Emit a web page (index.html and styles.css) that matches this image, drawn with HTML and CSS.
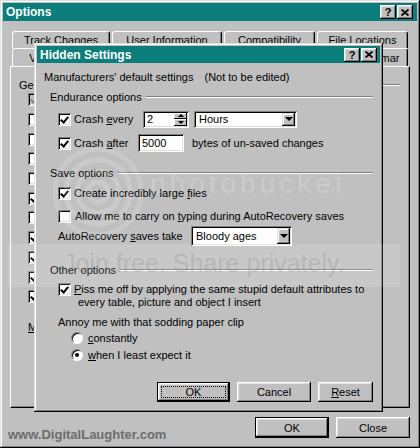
FILE: index.html
```html
<!DOCTYPE html>
<html lang="en">
<head>
    <meta charset="UTF-8">
    <meta name="viewport" content="width=device-width, initial-scale=1.0">
    <title>Options - Hidden Settings</title>
    <link rel="stylesheet" href="styles.css">
</head>
<body>
    <div class="window">
        <div class="titlebar">
            <span>Options</span>
            <div class="caption-btns">
                <span class="cbtn">?</span>
                <span class="cbtn"><svg width="8" height="7" viewBox="0 0 8 7"><path d="M0.5 0.5 L7.5 6.5 M7.5 0.5 L0.5 6.5" stroke="#000" stroke-width="1.8"/></svg></span>
            </div>
        </div>

        <div class="tabs">
            <div class="tab-row back">
                <div class="tab t-track">Track Changes</div>
                <div class="tab t-user">User Information</div>
                <div class="tab t-compat">Compatibility</div>
                <div class="tab t-files">File Locations</div>
            </div>
            <!-- middle tabs sit under the dialog, so only their frames are drawn -->
            <div class="tab-row front">
                <div class="tab t-view">View</div>
                <div class="tab t-general active"></div>
                <div class="tab t-small"></div>
                <div class="tab t-small"></div>
                <div class="tab t-small"></div>
                <div class="tab t-spelling">Spelling &amp; Grammar</div>
            </div>
        </div>

        <div class="panel">
            <div class="group-head">
                <span>General options</span>
                <span class="etch"></span>
            </div>
            <ul class="opt-list">
                <li><span class="check on disabled"></span></li>
                <li><span class="check"></span></li>
                <li><span class="check"></span></li>
                <li><span class="check"></span></li>
                <li><span class="check"></span></li>
                <li><span class="check on"></span></li>
                <li><span class="check"></span></li>
                <li><span class="check on"></span></li>
                <li><span class="check on"></span></li>
                <li><span class="check on"></span></li>
                <li><span class="check on"></span></li>
            </ul>
            <div class="units"><u>M</u></div>
        </div>

        <div class="footer">
            <span class="credit">www.DigitalLaughter.com</span>
            <button class="btn default wide">OK</button>
            <button class="btn wide">Close</button>
        </div>

        <div class="dialog">
            <div class="titlebar">
                <span>Hidden Settings</span>
                <div class="caption-btns">
                    <span class="cbtn">?</span>
                    <span class="cbtn"><svg width="8" height="7" viewBox="0 0 8 7"><path d="M0.5 0.5 L7.5 6.5 M7.5 0.5 L0.5 6.5" stroke="#000" stroke-width="1.8"/></svg></span>
                </div>
            </div>

            <div class="dialog-body">
                <div class="intro">Manufacturers' default settings <span class="note">(Not to be edited)</span></div>

                <section class="group endurance">
                    <div class="group-head"><span>Endurance options</span><span class="etch"></span></div>
                    <div class="opt every">
                        <span class="check on"></span>
                        <span class="lbl">Crash <u>e</u>very</span>
                        <div class="spin">
                            <span class="spin-val">2</span>
                            <span class="spin-btns">
                                <span><i class="tri-up"></i></span>
                                <span><i class="tri-down small"></i></span>
                            </span>
                        </div>
                        <div class="select hours">
                            <span class="select-val">Hours</span>
                            <span class="drop"><i class="tri-down"></i></span>
                        </div>
                    </div>
                    <div class="opt after">
                        <span class="check on"></span>
                        <span class="lbl">Crash <u>a</u>fter</span>
                        <div class="field bytes">5000</div>
                        <span class="suffix">bytes of un-saved changes</span>
                    </div>
                </section>

                <section class="group save">
                    <div class="group-head"><span>Save options</span><span class="etch"></span></div>
                    <div class="opt create">
                        <span class="check on"></span>
                        <span class="lbl">Create incredibly large <u>f</u>iles</span>
                    </div>
                    <div class="opt allow">
                        <span class="check"></span>
                        <span class="lbl">Allow me to carry on <u>t</u>yping during AutoRecovery saves</span>
                    </div>
                    <div class="opt autorec">
                        <span class="lbl">AutoRecovery <u>s</u>aves take</span>
                        <div class="select ages">
                            <span class="select-val">Bloody ages</span>
                            <span class="drop"><i class="tri-down"></i></span>
                        </div>
                    </div>
                </section>

                <section class="group other">
                    <div class="group-head"><span>Other options</span><span class="etch"></span></div>
                    <div class="opt multi">
                        <span class="check on"></span>
                        <span class="lbl"><u>P</u>iss me off by applying the same stupid default attributes to<br>every table, picture and object I insert</span>
                    </div>
                    <div class="opt annoy">Annoy me with that sodding paper clip</div>
                    <div class="opt radio-row">
                        <span class="radio"></span>
                        <span class="lbl"><u>c</u>onstantly</span>
                    </div>
                    <div class="opt radio-row">
                        <span class="radio on"></span>
                        <span class="lbl"><u>w</u>hen I least expect it</span>
                    </div>
                </section>

                <div class="dlg-buttons">
                    <button class="btn default ok"><span class="focus">OK</span></button>
                    <button class="btn cancel">Cancel</button>
                    <button class="btn reset"><u>R</u>eset</button>
                </div>
            </div>
        </div>

        <div class="watermark">
            <svg class="pb-logo" width="100" height="100" viewBox="0 0 100 100">
                <circle cx="50" cy="50" r="10" fill="none" stroke="#fff" stroke-opacity="0.16" stroke-width="5"/>
                <circle cx="50" cy="50" r="21" fill="none" stroke="#fff" stroke-opacity="0.16" stroke-width="5"/>
                <circle cx="50" cy="50" r="32" fill="none" stroke="#fff" stroke-opacity="0.16" stroke-width="5"/>
                <circle cx="50" cy="50" r="43" fill="none" stroke="#fff" stroke-opacity="0.14" stroke-width="5"/>
            </svg>
            <span class="pb-name">photobucket</span>
            <div class="pb-band">Join free. Share privately.</div>
        </div>
    </div>
</body>
</html>
```

FILE: styles.css
```css
* {
    box-sizing: border-box;
}
body {
    margin: 0;
    background: #c0c0c0;
    font-family: "Liberation Sans", Arial, sans-serif;
    font-size: 11px;
    color: #000;
}
button {
    font: inherit;
    color: #000;
    border: none;
    padding: 0;
}

/* window frame */
.window {
    position: relative;
    width: 420px;
    height: 448px;
    padding: 3px;
    background: #c0c0c0;
    display: flex;
    flex-direction: column;
    overflow: hidden;
    box-shadow: inset -1px -1px #000, inset 1px 1px #dfdfdf, inset -2px -2px #808080, inset 2px 2px #fff;
}
.titlebar {
    flex: none;
    height: 18px;
    padding: 0 4px 0 3px;
    display: flex;
    align-items: center;
    justify-content: space-between;
    background: #0b7d7b;
    color: #fff;
    font-size: 12px;
    font-weight: bold;
}
.caption-btns {
    display: flex;
    gap: 1px;
}
.cbtn {
    width: 16px;
    height: 14px;
    display: flex;
    align-items: center;
    justify-content: center;
    background: #c0c0c0;
    color: #000;
    font-size: 11px;
    font-weight: bold;
    box-shadow: inset -1px -1px #000, inset 1px 1px #fff, inset -2px -2px #808080, inset 2px 2px #dfdfdf;
}

/* tabs */
.tabs {
    flex: none;
    margin: 10px 9px 0;
}
.tab-row {
    display: flex;
}
.tab-row.back {
    height: 17px;
    gap: 2px;
}
.tab-row.front {
    height: 18px;
}
.tab {
    display: flex;
    align-items: center;
    justify-content: center;
    background: #c0c0c0;
    border-top: 1px solid #fff;
    border-left: 1px solid #fff;
    border-right: 1px solid #000;
    border-radius: 3px 3px 0 0;
    box-shadow: inset -1px 0 #808080;
    white-space: nowrap;
    overflow: hidden;
}
.t-track { width: 98px; }
.t-user { width: 110px; }
.t-compat { width: 91px; }
.t-files { flex: 1; }
.t-view { width: 58px; }
.t-general { width: 66px; }
.t-small { width: 52px; }
.t-spelling { flex: 1; }

/* tab sheet */
.panel {
    flex: none;
    height: 342px;
    margin: 0 7px;
    padding: 11px 9px 0 8px;
    border-top: 1px solid #fff;
    border-left: 1px solid #fff;
    border-right: 1px solid #000;
    border-bottom: 1px solid #000;
    box-shadow: inset -1px -1px #808080;
}
.group-head {
    display: flex;
    align-items: center;
    height: 14px;
    white-space: nowrap;
}
.etch {
    flex: 1;
    height: 2px;
    margin-left: 4px;
    border-top: 1px solid #808080;
    border-bottom: 1px solid #fff;
}
.opt-list {
    list-style: none;
    margin: -2px 0 0 9px;
    padding: 0;
}
.opt-list li {
    height: 19.7px;
    display: flex;
    align-items: center;
}
.units {
    margin-top: 14px;
    padding-left: 9px;
    height: 14px;
}

/* checkboxes and radios */
.check {
    position: relative;
    flex: none;
    width: 13px;
    height: 13px;
    background: #fff;
    box-shadow: inset 1px 1px #808080, inset -1px -1px #fff, inset 2px 2px #000, inset -2px -2px #dfdfdf;
}
.check.on::after {
    content: "";
    position: absolute;
    left: 4px;
    top: 2px;
    width: 3px;
    height: 6px;
    border: solid #000;
    border-width: 0 2px 2px 0;
    transform: rotate(40deg);
}
.check.disabled {
    background: #c0c0c0;
}
.check.disabled::after {
    border-color: #808080;
}
.radio {
    flex: none;
    width: 12px;
    height: 12px;
    display: flex;
    align-items: center;
    justify-content: center;
    border-radius: 50%;
    background: #fff;
    border: 1px solid;
    border-color: #808080 #fff #fff #808080;
    box-shadow: inset 1px 1px #000;
}
.radio.on::after {
    content: "";
    width: 4px;
    height: 4px;
    border-radius: 50%;
    background: #000;
}

/* buttons */
.btn {
    height: 20px;
    display: flex;
    align-items: center;
    justify-content: center;
    background: #c0c0c0;
    box-shadow: inset -1px -1px #000, inset 1px 1px #fff, inset -2px -2px #808080, inset 2px 2px #dfdfdf;
}
.btn.default {
    box-shadow: inset 0 0 0 1px #000, inset -2px -2px #000, inset 2px 2px #fff, inset -3px -3px #808080, inset 3px 3px #dfdfdf;
}
.btn.wide {
    width: 74px;
    height: 21px;
}
.focus {
    display: flex;
    align-items: center;
    justify-content: center;
    width: 100%;
    height: 100%;
    border: 1px dotted #000;
}

/* footer */
.footer {
    flex: 1;
    display: flex;
    align-items: flex-start;
    gap: 7px;
    padding: 9px 7px 0 5px;
}
.credit {
    align-self: flex-end;
    margin: 0 auto 3px 0;
    font-size: 13px;
    font-weight: bold;
    color: #6c6c6c;
}

/* hidden settings dialog */
.dialog {
    position: absolute;
    left: 34px;
    top: 43px;
    width: 349px;
    height: 369px;
    padding: 3px;
    display: flex;
    flex-direction: column;
    background: #c0c0c0;
    box-shadow: inset -1px -1px #000, inset 1px 1px #dfdfdf, inset -2px -2px #808080, inset 2px 2px #fff;
}
.dialog .titlebar {
    height: 17px;
    padding-right: 3px;
}
.dialog-body {
    flex: 1;
    padding: 0 7px;
    display: flex;
    flex-direction: column;
}
.intro {
    height: 18px;
    margin-top: 5px;
    display: flex;
    align-items: center;
    white-space: nowrap;
}
.note {
    margin-left: 11px;
}
.group .group-head {
    height: 18px;
    padding-left: 6px;
}
.opt {
    height: 18px;
    padding-left: 14px;
    display: flex;
    align-items: center;
    gap: 3px;
    white-space: nowrap;
}
.endurance { margin-top: 2px; }
.every { margin-top: 4px; }
.after { margin-top: 6px; }
.save { margin-top: 12px; }
.create { margin-top: 2px; }
.allow { margin-top: 5px; }
.autorec { margin-top: 1px; height: 20px; gap: 0; }
.other { margin-top: 15px; }
.every .lbl { width: 66px; }
.after .lbl { width: 61px; }
.autorec .lbl { width: 133px; }
.allow .lbl { padding-left: 1px; }

.multi {
    height: 26px;
    margin-top: 4px;
    align-items: flex-start;
    line-height: 13px;
}
.multi .lbl {
    padding-left: 4px;
    text-indent: -4px;
}
.annoy {
    height: 14px;
    margin-top: 6px;
}
.radio-row {
    height: 16px;
    margin-top: 1px;
    padding-left: 27px;
    gap: 5px;
}

/* fields */
.field,
.spin,
.select {
    background: #fff;
    box-shadow: inset 1px 1px #808080, inset -1px -1px #fff, inset 2px 2px #000, inset -2px -2px #dfdfdf;
}
.field {
    height: 18px;
    display: flex;
    align-items: center;
    padding-left: 4px;
}
.bytes {
    width: 46px;
}
.suffix {
    margin-left: 5px;
}
.spin {
    width: 46px;
    height: 17px;
    padding: 2px;
    display: flex;
}
.spin-val {
    flex: 1;
    padding-left: 2px;
    display: flex;
    align-items: center;
}
.spin-btns {
    width: 13px;
    display: flex;
    flex-direction: column;
}
.spin-btns span {
    flex: 1;
    display: flex;
    align-items: center;
    justify-content: center;
    background: #c0c0c0;
    box-shadow: inset -1px -1px #000, inset 1px 1px #fff;
}
.select {
    height: 17px;
    padding: 2px;
    display: flex;
}
.hours {
    width: 103px;
    margin-left: 2px;
}
.ages {
    width: 101px;
    height: 20px;
}
.select-val {
    flex: 1;
    padding-left: 3px;
    display: flex;
    align-items: center;
}
.drop {
    width: 13px;
    display: flex;
    align-items: center;
    justify-content: center;
    background: #c0c0c0;
    box-shadow: inset -1px -1px #000, inset 1px 1px #dfdfdf, inset -2px -2px #808080, inset 2px 2px #fff;
}
.tri-down {
    width: 0;
    height: 0;
    border-left: 4px solid transparent;
    border-right: 4px solid transparent;
    border-top: 4px solid #000;
}
.tri-down.small {
    border-left-width: 3px;
    border-right-width: 3px;
    border-top-width: 3px;
}
.tri-up {
    width: 0;
    height: 0;
    border-left: 3px solid transparent;
    border-right: 3px solid transparent;
    border-bottom: 3px solid #000;
}

.dlg-buttons {
    height: 20px;
    margin-top: 19px;
    display: flex;
    justify-content: flex-end;
    gap: 7px;
}
.ok { width: 73px; padding: 4px; }
.cancel { width: 74px; }
.reset { width: 55px; }

/* image host watermark */
.watermark {
    position: absolute;
    inset: 0;
    pointer-events: none;
}
.pb-logo {
    position: absolute;
    left: 48px;
    top: 142px;
}
.pb-name {
    position: absolute;
    left: 150px;
    top: 168px;
    font-size: 28px;
    letter-spacing: 4px;
    color: rgba(255, 255, 255, 0.2);
}
.pb-band {
    position: absolute;
    left: 8px;
    top: 244px;
    width: 392px;
    height: 43px;
    padding: 0 0 5px 55px;
    display: flex;
    align-items: center;
    background: rgba(255, 255, 255, 0.13);
    font-size: 25px;
    color: rgba(90, 90, 90, 0.18);
}
```
